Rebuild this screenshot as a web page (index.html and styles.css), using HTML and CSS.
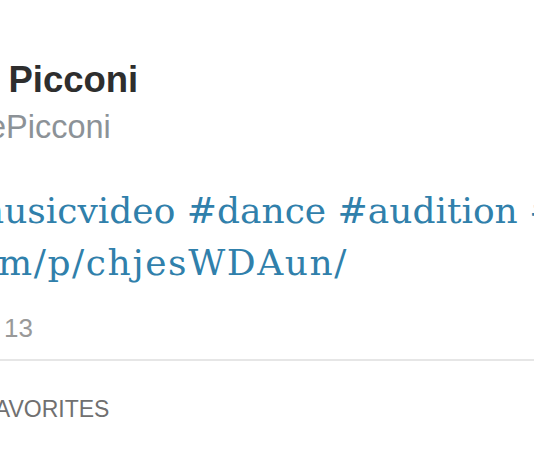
FILE: index.html
```html
<!DOCTYPE html>
<html>
<head>
<meta charset="utf-8">
<link rel="stylesheet" href="styles.css">
</head>
<body>
<div class="tweet">
  <div class="name">e Picconi</div>
  <div class="handle">ePicconi</div>
  <div class="text">
    <div class="line line1"><a>musicvideo</a> <a>#dance</a> <a>#audition</a> <a>#instagram</a></div>
    <div class="line line2"><a>m/p/chjesWDAun/</a></div>
  </div>
  <div class="date">13</div>
  <div class="sep"></div>
  <div class="stats">FAVORITES</div>
</div>
</body>
</html>
```
FILE: styles.css
```css
html, body {
  margin: 0;
  padding: 0;
  background: #ffffff;
}
body {
  width: 534px;
  height: 462px;
  overflow: hidden;
}
.tweet {
  padding-top: 60px;
  font-family: "Liberation Sans", Arial, sans-serif;
}
.name {
  font-size: 36.5px;
  line-height: 40px;
  font-weight: bold;
  color: #2e2e2e;
  white-space: nowrap;
  text-indent: -22px;
}
.handle {
  margin-top: 9px;
  font-size: 32.5px;
  line-height: 36px;
  color: #8c9297;
  white-space: nowrap;
  text-indent: -12px;
}
.text {
  margin-top: 40px;
  font-family: "DejaVu Serif", Georgia, serif;
  font-size: 36px;
  line-height: 52px;
  color: #3080ab;
}
.line {
  white-space: nowrap;
}
.line1 {
  text-indent: -30px;
}
.line2 {
  text-indent: -2px;
  letter-spacing: 1.6px;
}
.date {
  margin-top: 24px;
  font-size: 26px;
  line-height: 30px;
  color: #999999;
  text-indent: 4px;
}
.sep {
  margin-top: 16px;
  height: 2px;
  background: #e6e6e6;
}
.stats {
  margin-top: 35px;
  font-size: 23px;
  line-height: 26px;
  color: #707070;
  white-space: nowrap;
  text-indent: -18px;
}
```
